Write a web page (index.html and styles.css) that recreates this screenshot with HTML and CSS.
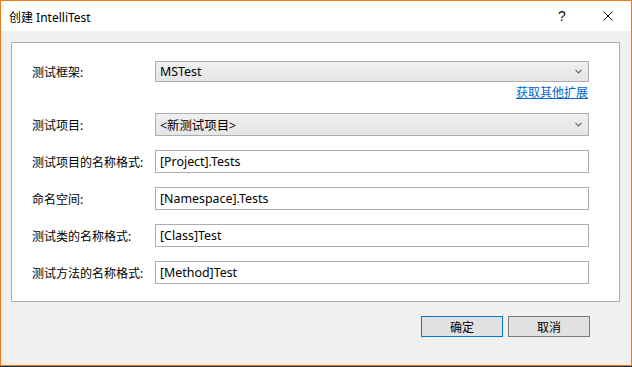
FILE: index.html
```html
<!DOCTYPE html>
<html lang="zh-CN">
<head>
<meta charset="utf-8">
<title>创建 IntelliTest</title>
<link rel="stylesheet" href="styles.css">
</head>
<body>
<div class="window">
  <div class="titlebar">
    <span class="title">创建 IntelliTest</span>
    <div class="caption-buttons">
      <span class="cap-btn help">?</span>
      <span class="cap-btn close">
        <svg width="10" height="10" viewBox="0 0 10 10"><path d="M0.5 0.5 L9.5 9.5 M9.5 0.5 L0.5 9.5" stroke="#111" stroke-width="1" fill="none"/></svg>
      </span>
    </div>
  </div>
  <div class="client">
    <div class="group">
      <div class="row row-first">
        <label class="lbl">测试框架:</label>
        <div class="combo combo-sm"><span class="val">MSTest</span><span class="arrow"><svg width="7" height="5" viewBox="0 0 7 5"><path d="M0.5 0.8 L3.5 3.8 L6.5 0.8" stroke="#666" stroke-width="1.2" fill="none"/></svg></span></div>
      </div>
      <div class="link-row"><a class="link" href="#">获取其他扩展</a></div>
      <div class="row row-combo2">
        <label class="lbl">测试项目:</label>
        <div class="combo"><span class="val">&lt;新测试项目&gt;</span><span class="arrow"><svg width="7" height="5" viewBox="0 0 7 5"><path d="M0.5 0.8 L3.5 3.8 L6.5 0.8" stroke="#666" stroke-width="1.2" fill="none"/></svg></span></div>
      </div>
      <div class="row">
        <label class="lbl">测试项目的名称格式:</label>
        <div class="textbox">[Project].Tests</div>
      </div>
      <div class="row">
        <label class="lbl">命名空间:</label>
        <div class="textbox">[Namespace].Tests</div>
      </div>
      <div class="row">
        <label class="lbl">测试类的名称格式:</label>
        <div class="textbox">[Class]Test</div>
      </div>
      <div class="row">
        <label class="lbl">测试方法的名称格式:</label>
        <div class="textbox">[Method]Test</div>
      </div>
    </div>
    <div class="footer">
      <button class="btn btn-default">确定</button>
      <button class="btn">取消</button>
    </div>
  </div>
</div>
</body>
</html>
```

FILE: styles.css
```css
* { box-sizing: border-box; }
html, body {
  margin: 0;
  padding: 0;
  background: #2b2b2b;
  width: 632px;
  height: 367px;
  overflow: hidden;
}
body {
  font-family: "Noto Sans", "Noto Sans CJK SC", sans-serif;
  font-size: 12px;
  color: #000;
}
.window {
  width: 632px;
  height: 366px;
  border: 1px solid #ec7c1a;
  background: #f0f0f0;
  display: flex;
  flex-direction: column;
}
.titlebar {
  height: 30px;
  background: #fff;
  display: flex;
  align-items: center;
  justify-content: space-between;
}
.title {
  padding-left: 8px;
  font-size: 12px;
  color: #000;
  padding-top: 1px;
}
.caption-buttons {
  display: flex;
  height: 30px;
}
.cap-btn {
  width: 46px;
  height: 30px;
  display: flex;
  align-items: center;
  justify-content: center;
}
.help {
  font-size: 14px;
  color: #111;
  font-family: "Liberation Sans", sans-serif;
}
.client {
  flex: 1;
  padding: 11px 11px 0 10px;
  display: flex;
  flex-direction: column;
}
.group {
  height: 260px;
  background: #fff;
  border: 1px solid #ababab;
  padding: 0 30px 0 20px;
  display: flex;
  flex-direction: column;
}
.row {
  display: flex;
  align-items: center;
  margin-top: 14px;
}
.row-first { margin-top: 18px; }
.row-combo2 { margin-top: 12px; }
.lbl {
  width: 123px;
  flex: none;
  white-space: nowrap;
  padding-top: 1px;
}
.combo {
  width: 434px;
  height: 23px;
  border: 1px solid #adadad;
  background: linear-gradient(#f0f0f0, #e5e5e5);
  display: flex;
  align-items: center;
  justify-content: space-between;
  padding: 0 6px 0 4px;
}
.combo-sm { height: 21px; }
.arrow { display: flex; align-items: center; }
.textbox {
  width: 434px;
  height: 23px;
  border: 1px solid #abadb3;
  background: #fff;
  display: flex;
  align-items: center;
  padding: 0 4px;
  font-size: 12.4px;
}
.combo .val { font-size: 12.4px; }
.link-row {
  display: flex;
  justify-content: flex-end;
  margin-top: 3px;
  height: 16px;
  line-height: 16px;
  padding-right: 1px;
}
.link {
  color: #0066cc;
  text-decoration: underline;
}
.footer {
  display: flex;
  justify-content: flex-end;
  gap: 5px;
  padding: 14px 30px 0 0;
}
.btn {
  width: 82px;
  height: 21px;
  background: #e1e1e1;
  border: 1px solid #7a7a7a;
  font-family: "Noto Sans CJK SC", sans-serif;
  font-size: 12px;
  color: #000;
  padding: 0;
  line-height: 18px;
}
.btn-default { border-color: #0078d7; }
```
